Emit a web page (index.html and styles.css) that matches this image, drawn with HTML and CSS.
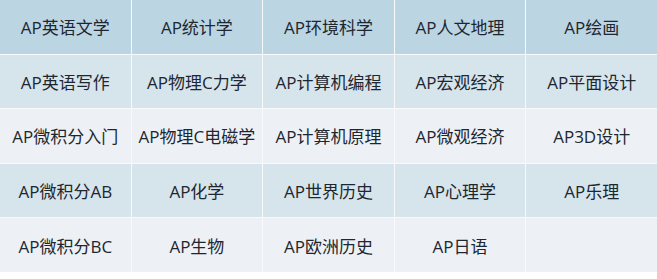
FILE: index.html
```html
<!DOCTYPE html>
<html lang="zh-CN">
<head>
<meta charset="utf-8">
<link rel="stylesheet" href="styles.css">
</head>
<body>
<div class="grid">
  <div class="cell r1">AP英语文学</div>
  <div class="cell r1">AP统计学</div>
  <div class="cell r1">AP环境科学</div>
  <div class="cell r1">AP人文地理</div>
  <div class="cell r1">AP绘画</div>

  <div class="cell r2">AP英语写作</div>
  <div class="cell r2">AP物理C力学</div>
  <div class="cell r2">AP计算机编程</div>
  <div class="cell r2">AP宏观经济</div>
  <div class="cell r2">AP平面设计</div>

  <div class="cell r3">AP微积分入门</div>
  <div class="cell r3">AP物理C电磁学</div>
  <div class="cell r3">AP计算机原理</div>
  <div class="cell r3">AP微观经济</div>
  <div class="cell r3">AP3D设计</div>

  <div class="cell r2">AP微积分AB</div>
  <div class="cell r2">AP化学</div>
  <div class="cell r2">AP世界历史</div>
  <div class="cell r2">AP心理学</div>
  <div class="cell r2">AP乐理</div>

  <div class="cell r3">AP微积分BC</div>
  <div class="cell r3">AP生物</div>
  <div class="cell r3">AP欧洲历史</div>
  <div class="cell r3">AP日语</div>
  <div class="cell r3"></div>
</div>
</body>
</html>
```

FILE: styles.css
```css
html, body {
  margin: 0;
  padding: 0;
  background: #ffffff;
}

.grid {
  width: 657px;
  display: grid;
  grid-template-columns: repeat(5, 1fr);
  grid-auto-rows: 53.6px;
  gap: 1px;
  background: #f7f9fb;
}

.cell {
  display: flex;
  align-items: center;
  justify-content: center;
  font-family: "Open Sans", "Noto Sans CJK SC", sans-serif;
  font-size: 17px;
  color: #1d2731;
  white-space: nowrap;
}

.r1 { background: #bcd5e2; }
.r2 { background: #d6e4ec; }
.r3 { background: #edf1f5; }
```
